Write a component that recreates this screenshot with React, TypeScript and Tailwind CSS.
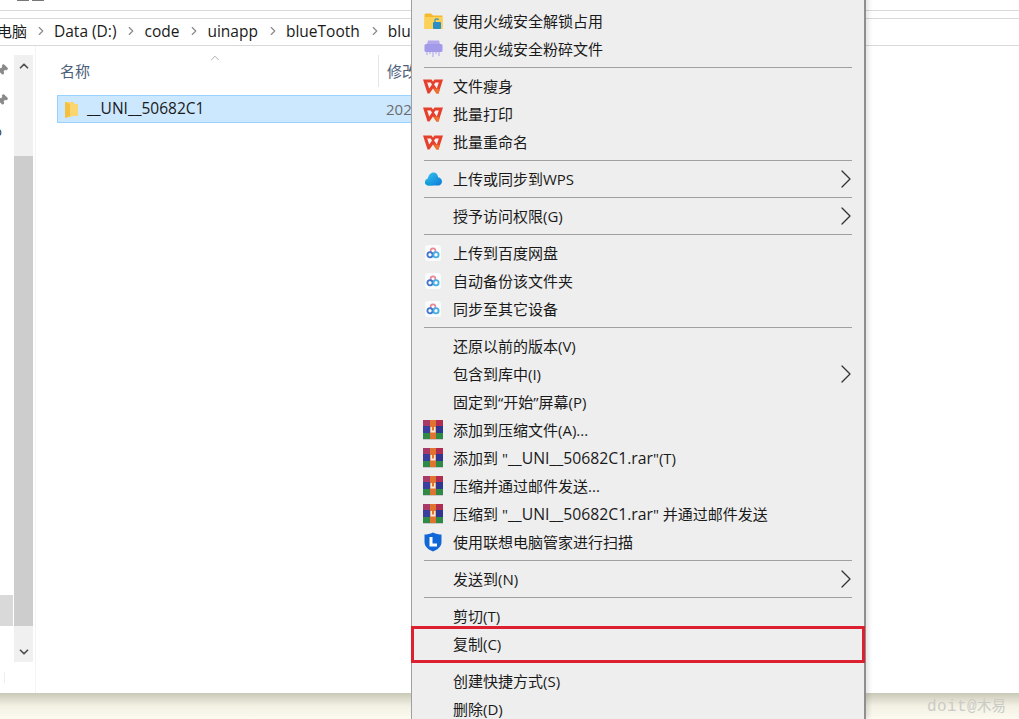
import React from 'react';
import { ChevronRight, ChevronUp, ChevronDown, Pin } from 'lucide-react';

const CJK = "font-['Open_Sans','Noto_Sans_CJK_SC',sans-serif]";

function WpsIcon() {
  return (
    <svg width="20" height="15" viewBox="0 0 20 15">
      <path d="M0 0.5 H8.5 L10 2.5 L11.5 0.5 H20 L15.5 14.5 H13.5 L10 9.5 L6.5 14.5 H4.5 Z" fill="#e5402c" />
      <path d="M4.2 3.5 H7.6 L9 5.5 L6.2 9.6 Z" fill="#f7f3f2" />
      <path d="M15.8 3.5 H12.4 L11 5.5 L13.8 9.6 Z" fill="#f7f3f2" />
      <path d="M10 9.5 L13.5 14.5 H15.5 L17 10 Z" fill="#f0702c" />
    </svg>
  );
}

function CloudIcon() {
  return (
    <svg width="17" height="14" viewBox="0 0 17 14">
      <defs>
        <linearGradient id="cloud" x1="0" y1="0" x2="1" y2="1">
          <stop offset="0" stopColor="#35c6ee" />
          <stop offset="1" stopColor="#0b78d8" />
        </linearGradient>
      </defs>
      <path d="M3.5 13.5 C1.5 13.5 0 12 0 10 C0 8.3 1.1 7 2.8 6.6 C3.5 3 5.8 0.5 8.5 0.5 C11 0.5 12.6 2.3 13.2 5.2 C15.4 5.5 17 7.4 17 9.5 C17 11.8 15.4 13.5 13.2 13.5 Z" fill="url(#cloud)" />
      <path d="M3.5 13.5 C1.5 13.5 0 12 0 10 C2 9 5 10 8 13.5 Z" fill="#0e9fd8" />
    </svg>
  );
}

function BaiduIcon() {
  return (
    <svg width="16" height="16" viewBox="0 0 16 16">
      <rect width="16" height="16" rx="3" fill="#f9fbfd" />
      <circle cx="8" cy="5.8" r="2.4" fill="none" stroke="#e8889a" strokeWidth="1.6" />
      <circle cx="5" cy="9.8" r="2.6" fill="none" stroke="#3d74d0" strokeWidth="1.8" />
      <circle cx="11" cy="9.8" r="2.6" fill="none" stroke="#45b0e6" strokeWidth="1.8" />
    </svg>
  );
}

function RarIcon() {
  return (
    <svg width="20" height="20" viewBox="0 0 20 20">
      <rect x="0" y="0" width="7" height="6" fill="#a83a68" />
      <rect x="13" y="0" width="7" height="6" fill="#b02c50" />
      <rect x="0" y="6" width="7" height="7" fill="#3a3f9e" />
      <rect x="13" y="6" width="7" height="7" fill="#2e3692" />
      <rect x="0" y="13" width="7" height="6" fill="#2f8a46" />
      <rect x="13" y="13" width="7" height="6" fill="#2f8a46" />
      <rect x="7" y="0" width="6" height="19" fill="#e0732f" />
      <path d="M7.5 7 H9 V10.5 H11 V7 H12.5 V12.5 H7.5 Z" fill="#f6ece0" />
      <rect x="0" y="19" width="20" height="1" fill="#c8c8c8" />
    </svg>
  );
}

function LenovoIcon() {
  return (
    <svg width="18" height="20" viewBox="0 0 18 20">
      <path d="M9 0.5 C12 2 15 2.5 17.5 2.5 V10 C17.5 15 13 18 9 19.5 C5 18 0.5 15 0.5 10 V2.5 C3 2.5 6 2 9 0.5 Z" fill="#1267d8" />
      <path d="M7 5 V13 H13" fill="none" stroke="#fff" strokeWidth="3" />
    </svg>
  );
}

function FolderLockIcon() {
  return (
    <svg width="19" height="17" viewBox="0 0 19 17">
      <path d="M0.5 2 C0.5 1 1 0.5 2 0.5 H7 L9 2.5 H18 C18.5 2.5 18.5 3 18.5 3.5 V16 H0.5 Z" fill="#f6b92e" />
      <rect x="0.5" y="4" width="18" height="12" fill="#fbd257" />
      <rect x="9" y="9" width="8" height="7" rx="1" fill="#2a8fc6" />
      <path d="M11 9 V7 C11 5.5 14.5 5.5 14.5 7" fill="none" stroke="#2a8fc6" strokeWidth="1.2" />
    </svg>
  );
}

function ShredIcon() {
  return (
    <svg width="19" height="18" viewBox="0 0 19 18">
      <path d="M4 0.5 H15 L16 4 H3 Z" fill="#b3a9ec" />
      <rect x="0.5" y="4" width="18" height="8" rx="1.5" fill="#a49aea" />
      <path d="M3 12 V15 M6 12 V14 M9 12 V17 M12 12 V14 M15 12 V16" stroke="#c4bdf2" strokeWidth="1.6" />
    </svg>
  );
}

type Row = { label: React.ReactNode; icon?: React.ReactNode; more?: boolean };

const rarName = <span className="text-[15.75px] leading-[15px]">__UNI__50682C1.rar</span>;

const groups: Row[][] = [
  [
    { label: '' },
    { label: '使用火绒安全解锁占用', icon: <FolderLockIcon /> },
    { label: '使用火绒安全粉碎文件', icon: <ShredIcon /> },
  ],
  [
    { label: '文件瘦身', icon: <WpsIcon /> },
    { label: '批量打印', icon: <WpsIcon /> },
    { label: '批量重命名', icon: <WpsIcon /> },
  ],
  [{ label: '上传或同步到WPS', icon: <CloudIcon />, more: true }],
  [{ label: '授予访问权限(G)', more: true }],
  [
    { label: '上传到百度网盘', icon: <BaiduIcon /> },
    { label: '自动备份该文件夹', icon: <BaiduIcon /> },
    { label: '同步至其它设备', icon: <BaiduIcon /> },
  ],
  [
    { label: '还原以前的版本(V)' },
    { label: '包含到库中(I)', more: true },
    { label: '固定到“开始”屏幕(P)' },
    { label: '添加到压缩文件(A)...', icon: <RarIcon /> },
    { label: <>添加到 "{rarName}"(T)</>, icon: <RarIcon /> },
    { label: '压缩并通过邮件发送...', icon: <RarIcon /> },
    { label: <>压缩到 "{rarName}" 并通过邮件发送</>, icon: <RarIcon /> },
    { label: '使用联想电脑管家进行扫描', icon: <LenovoIcon /> },
  ],
  [{ label: '发送到(N)', more: true }],
  [{ label: '剪切(T)' }, { label: '复制(C)' }],
  [{ label: '创建快捷方式(S)' }, { label: '删除(D)' }],
];

function ContextMenu() {
  return (
    <div className="absolute left-[411px] top-[-21px] w-[455px] h-[740px] overflow-hidden bg-[#eeeeee] border-l border-l-[#a0a0a0] border-r-2 border-r-[#8f8f8f] shadow-[3px_0_4px_rgba(0,0,0,0.1)]">
      {groups.map((rows, i) => (
        <div key={i}>
          {i > 0 && (
            <div className="h-[9px] flex items-center pl-[12px] pr-[12px]">
              <div className="h-px w-full bg-[#a0a0a0]" />
            </div>
          )}
          {rows.map((row, j) => (
            <div key={j} className="h-[28px] flex items-center relative">
              <div className="w-[41px] flex justify-center items-center pl-[1px]">{row.icon}</div>
              <span className="text-[15px] text-[#1a1a1a] whitespace-pre leading-none">{row.label}</span>
              {row.more && <ChevronRight className="absolute right-[2px] text-[#333333]" size={32} strokeWidth={0.95} />}
            </div>
          ))}
        </div>
      ))}
    </div>
  );
}

const crumbs = ['Data (D:)', 'code', 'uinapp', 'blueTooth', 'blu'];

export default function App() {
  return (
    <div className={`relative w-[1019px] h-[719px] overflow-hidden bg-white ${CJK}`}>
      <div className="h-[693px] flex flex-col">
        <div className="h-[11px] border-b border-[#d9d9d9] pl-[17px] shrink-0 overflow-hidden">
          <div className="h-[1px] w-[28px] flex gap-[3px]">
            <div className="h-full w-[12px] bg-[#777777]" />
            <div className="h-full w-[12px] bg-[#777777]" />
          </div>
        </div>
        <div className="h-[7px] shrink-0" />
        <div className="h-[28px] shrink-0 border-y border-[#d9d9d9] flex items-center text-[15.5px] leading-[22px] pb-[2px] text-[#1a1a1a] overflow-hidden">
          <span className="ml-[-3px] w-[38px] text-[15px]">电脑</span>
          {crumbs.map((c) => (
            <div key={c} className="flex items-center">
              <ChevronRight size={14} strokeWidth={2} className="text-[#8a8a8a] mr-[6px] ml-[-1px]" />
              <span className="mr-[9px] whitespace-nowrap">{c}</span>
            </div>
          ))}
        </div>
        <div className="flex flex-1 min-h-0">
          <div className="w-[14px] relative overflow-hidden">
            <Pin size={12} className="absolute left-[-4px] top-[18px] rotate-45 text-[#8a8a8a] fill-[#8a8a8a]" />
            <Pin size={12} className="absolute left-[-4px] top-[48px] rotate-45 text-[#8a8a8a] fill-[#8a8a8a]" />
            <span className="absolute left-[-6px] top-[76px] text-[13px] text-[#333333]">p</span>
            <div className="absolute left-0 top-[549px] w-[13px] h-[31px] bg-[#d9d9d9]" />
            <div className="absolute left-[4px] top-[626px] w-px h-[11px] bg-[#eeeeee]" />
          </div>
          <div className="w-[19px] mt-[9px] h-[607px] bg-[#f0f0f0] flex flex-col">
            <div className="h-[101px] flex items-start justify-center pt-[4px]">
              <ChevronUp size={14} strokeWidth={3} className="text-[#505050]" />
            </div>
            <div className="h-[470px] bg-[#cdcdcd]" />
            <div className="flex-1 flex items-end justify-center pb-[3px]">
              <ChevronDown size={14} strokeWidth={3} className="text-[#505050]" />
            </div>
          </div>
          <div className="flex-1 ml-[2px] border-l border-[#f4f4f4] relative">
            <div className="h-[32px] mt-[9px] relative flex items-center">
              <span className="ml-[24px] text-[15px] leading-[20px] text-[#4c607a]">名称</span>
              <ChevronUp size={14} strokeWidth={1} className="absolute left-[172px] top-[-4px] text-[#777777]" />
              <div className="absolute left-[342px] top-0 h-[32px] w-px bg-[#e5e5e5]" />
              <span className="absolute left-[351px] text-[15px] leading-[20px] text-[#4c607a]">修改</span>
            </div>
            <div className="ml-[21px] mt-[8px] w-[360px] h-[28px] bg-[#cce8ff] border border-[#99d1ff] flex items-center">
              <svg width="13" height="17" viewBox="0 0 13 17" className="ml-[7px]">
                <path d="M0 1 H9 V3 H13 V15 H9 L0 17 Z" fill="#fbd56f" />
                <path d="M0 1 L5 3 V15 L0 17 Z" fill="#f5c040" />
              </svg>
              <span className="ml-[9px] text-[15.5px] text-[#1a1a1a] whitespace-nowrap">__UNI__50682C1</span>
              <span className="absolute left-[350px] text-[15px] text-[#6d6d6d]">202</span>
            </div>
          </div>
        </div>
      </div>
      <div className="h-[26px] bg-gradient-to-b from-[#c9c9b8] via-[#f3f1e4] to-[#fdfbf0]" />
      <ContextMenu />
      <div className="absolute left-[411px] top-[626px] w-[454px] h-[37px] border-[3px] border-[#dd2030]" />
      <span className="absolute left-[927px] top-[696px] text-[14.5px] leading-[22px] text-[#cbcbc5] whitespace-nowrap font-['Liberation_Mono','Noto_Sans_CJK_SC',monospace]">
        <span className="text-[16px] tracking-[0.4px]">doit@</span>木易
      </span>
    </div>
  );
}
